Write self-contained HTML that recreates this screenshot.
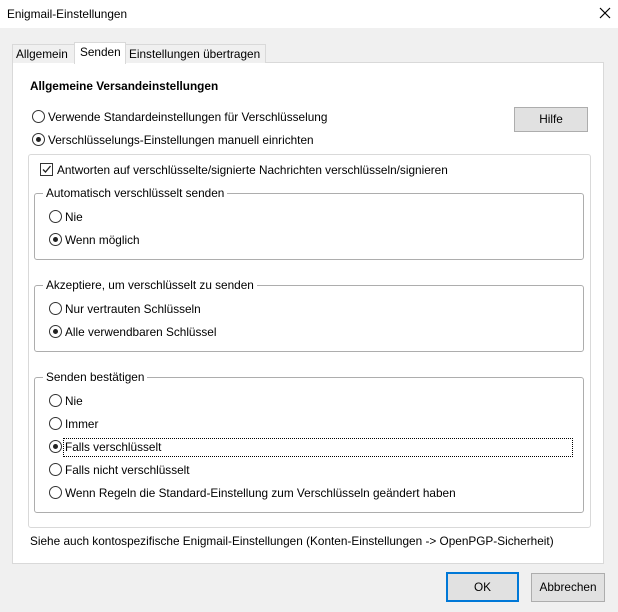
<!DOCTYPE html><html><head><style>
body{margin:0;width:618px;height:612px;background:#f0f0f0;font:11.8px "Liberation Sans",sans-serif;color:#000;position:relative;overflow:hidden}
.a{position:absolute;white-space:nowrap;line-height:14px}
.r{position:absolute;width:11px;height:11px;border:1px solid #333;border-radius:50%;background:#fff;box-sizing:content-box}
.r.on::after{content:"";position:absolute;left:3px;top:3px;width:5px;height:5px;border-radius:50%;background:#222}
.g{position:absolute;border:1px solid #adadad;border-radius:3px}
.lg{position:absolute;background:#fff;padding:0 3px;line-height:14px;top:-8px;left:8px}
.btn{position:absolute;background:#e1e1e1;border:1px solid #adadad;text-align:center;box-sizing:border-box}
</style></head><body>
<div style="position:absolute;left:0;top:0;width:618px;height:28px;background:#fff"></div>
<div class="a" style="left:7px;top:7px">Enigmail-Einstellungen</div>
<svg style="position:absolute;left:599px;top:7px" width="12" height="12"><path d="M1 1L11 11M11 1L1 11" stroke="#000" stroke-width="1.2"/></svg>
<div style="position:absolute;left:12px;top:62px;width:590px;height:500px;background:#fff;border:1px solid #d9d9d9"></div>
<div style="position:absolute;left:12px;top:44px;width:62px;height:18px;background:#f0f0f0;border:1px solid #d9d9d9;border-bottom:none"></div>
<div style="position:absolute;left:124px;top:44px;width:140px;height:18px;background:#f0f0f0;border:1px solid #d9d9d9;border-bottom:none"></div>
<div style="position:absolute;left:74px;top:42px;width:50px;height:21px;background:#fff;border:1px solid #d9d9d9;border-bottom:none"></div>
<div class="a" style="left:16px;top:47px">Allgemein</div>
<div class="a" style="left:80px;top:45px">Senden</div>
<div class="a" style="left:129px;top:47px">Einstellungen übertragen</div>
<div class="a" style="left:30px;top:79px;font-weight:bold">Allgemeine Versandeinstellungen</div>
<div class="r" style="left:32px;top:110px"></div><div class="a" style="left:48px;top:110px">Verwende Standardeinstellungen für Verschlüsselung</div>
<div class="r on" style="left:32px;top:133px"></div><div class="a" style="left:48px;top:133px">Verschlüsselungs-Einstellungen manuell einrichten</div>
<div class="btn" style="left:514px;top:107px;width:74px;height:25px;line-height:23px">Hilfe</div>
<div style="position:absolute;left:28px;top:154px;width:561px;height:372px;border:1px solid #d9d9d9;border-radius:3px"></div>
<div style="position:absolute;left:40px;top:163px;width:11px;height:11px;border:1px solid #333;background:#fff"></div>
<svg style="position:absolute;left:41px;top:164px" width="11" height="11"><path d="M2 5.5L4.5 8L9.5 2" stroke="#222" stroke-width="1.3" fill="none"/></svg>
<div class="a" style="left:57px;top:163px">Antworten auf verschlüsselte/signierte Nachrichten verschlüsseln/signieren</div>
<div class="g" style="left:34px;top:193px;width:548px;height:65px"><div class="lg">Automatisch verschlüsselt senden</div></div>
<div class="r" style="left:49px;top:210px"></div><div class="a" style="left:65px;top:210px">Nie</div>
<div class="r on" style="left:49px;top:233px"></div><div class="a" style="left:65px;top:233px">Wenn möglich</div>
<div class="g" style="left:34px;top:285px;width:548px;height:65px"><div class="lg">Akzeptiere, um verschlüsselt zu senden</div></div>
<div class="r" style="left:49px;top:302px"></div><div class="a" style="left:65px;top:302px">Nur vertrauten Schlüsseln</div>
<div class="r on" style="left:49px;top:325px"></div><div class="a" style="left:65px;top:325px">Alle verwendbaren Schlüssel</div>
<div class="g" style="left:34px;top:377px;width:548px;height:134px"><div class="lg">Senden bestätigen</div></div>
<div class="r" style="left:49px;top:394px"></div><div class="a" style="left:65px;top:394px">Nie</div>
<div class="r" style="left:49px;top:417px"></div><div class="a" style="left:65px;top:417px">Immer</div>
<div class="r on" style="left:49px;top:440px"></div><div class="a" style="left:65px;top:440px">Falls verschlüsselt</div>
<div style="position:absolute;left:63px;top:438px;width:508px;height:17px;border:1px dotted #000"></div>
<div class="r" style="left:49px;top:463px"></div><div class="a" style="left:65px;top:463px">Falls nicht verschlüsselt</div>
<div class="r" style="left:49px;top:486px"></div><div class="a" style="left:65px;top:486px">Wenn Regeln die Standard-Einstellung zum Verschlüsseln geändert haben</div>
<div class="a" style="left:30px;top:534px">Siehe auch kontospezifische Enigmail-Einstellungen (Konten-Einstellungen -&gt; OpenPGP-Sicherheit)</div>
<div class="btn" style="left:446px;top:572px;width:73px;height:30px;border:2px solid #0078d7;line-height:26px">OK</div>
<div class="btn" style="left:531px;top:573px;width:74px;height:29px;line-height:27px">Abbrechen</div>
</body></html>
